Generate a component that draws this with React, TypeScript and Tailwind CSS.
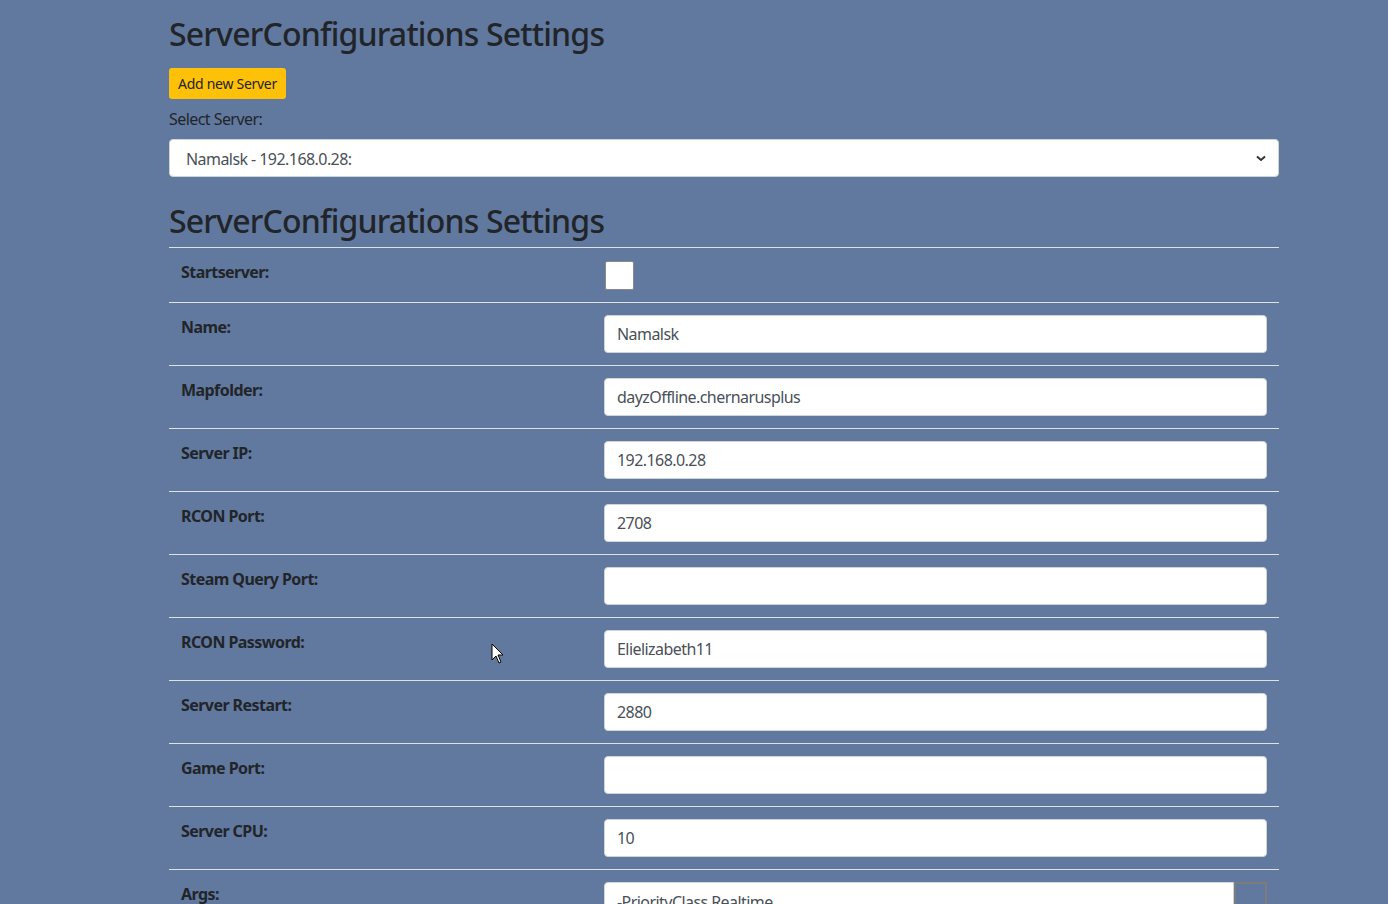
import React from 'react';

const fields: { label: string; value: string }[] = [
  { label: 'Name:', value: 'Namalsk' },
  { label: 'Mapfolder:', value: 'dayzOffline.chernarusplus' },
  { label: 'Server IP:', value: '192.168.0.28' },
  { label: 'RCON Port:', value: '2708' },
  { label: 'Steam Query Port:', value: '' },
  { label: 'RCON Password:', value: 'Elielizabeth11' },
  { label: 'Server Restart:', value: '2880' },
  { label: 'Game Port:', value: '' },
  { label: 'Server CPU:', value: '10' },
];

const font = { fontFamily: '"Noto Sans", "Open Sans", sans-serif' };

const App: React.FC = () => {
  return (
    <div className="relative h-[904px] overflow-hidden bg-[#61799e] text-[#212529] tracking-[-0.035em]" style={font}>
      <div className="ml-[169px] w-[1110px] pt-[15px]">
        <h2 className="text-[32px] font-medium leading-[1.2] mb-[15px] tracking-[-0.8px]">ServerConfigurations Settings</h2>

        <button className="h-[31px] px-[9px] rounded-[3px] bg-[#ffc107] text-[14px] text-[#212529] leading-[21px] tracking-[-0.02em]">
          Add new Server
        </button>

        <div className="mt-2 text-[16px] leading-6 text-[#212529]">Select Server:</div>

        <div className="mt-2 h-[38px] w-full flex items-center justify-between bg-white border border-[#ced4da] rounded-[4px] pl-4 pr-3 text-[16px] text-[#495057]">
          <span className="pt-px">Namalsk - 192.168.0.28:</span>
          <svg width="10" height="7" viewBox="0 0 10 7">
            <path d="M1 1.5 L5 5 L9 1.5" stroke="#333" strokeWidth="2" fill="none" />
          </svg>
        </div>

        <h2 className="mt-[25px] text-[32px] font-medium leading-[1.2] mb-[6px] tracking-[-0.8px]">ServerConfigurations Settings</h2>

        <div className="w-full">
          <div className="flex border-t border-[#dee2e6]">
            <div className="w-[423px] p-3 text-[16px] font-bold leading-6">Startserver:</div>
            <div className="flex-1 px-3 pt-[13px] pb-[12px]">
              <div className="ml-px w-[29px] h-[29px] bg-white border border-[#8a8a8a] rounded-[2px]" />
            </div>
          </div>

          {fields.map((f) => (
            <div key={f.label} className="flex border-t border-[#dee2e6]">
              <div className="w-[423px] p-3 text-[16px] font-bold leading-6">{f.label}</div>
              <div className="flex-1 p-3">
                <div className="w-[663px] h-[38px] bg-white border border-[#ced4da] rounded-[4px] px-3 pt-px flex items-center text-[16px] text-[#495057]">
                  {f.value}
                </div>
              </div>
            </div>
          ))}

          <div className="flex border-t border-[#dee2e6]">
            <div className="w-[423px] p-3 text-[16px] font-bold leading-6">Args:</div>
            <div className="flex-1 p-3">
              <div className="w-[663px] h-[60px] flex">
                <div className="flex-1 bg-white border border-[#ced4da] rounded-l-[4px] px-3 pt-[7px] text-[16px] leading-6 text-[#495057]">
                  -PriorityClass Realtime
                </div>
                <div className="w-[33px] border-2 border-[#7c7c7c]" />
              </div>
            </div>
          </div>
        </div>
      </div>

      {/* mouse pointer */}
      <svg className="absolute left-[491px] top-[643px]" width="14" height="22" viewBox="0 0 14 22">
        <path d="M1 1 L1 17 L5 13 L8 20 L10 19 L7 12 L12 12 Z" fill="white" stroke="black" strokeWidth="1" />
      </svg>
    </div>
  );
};

export default App;
